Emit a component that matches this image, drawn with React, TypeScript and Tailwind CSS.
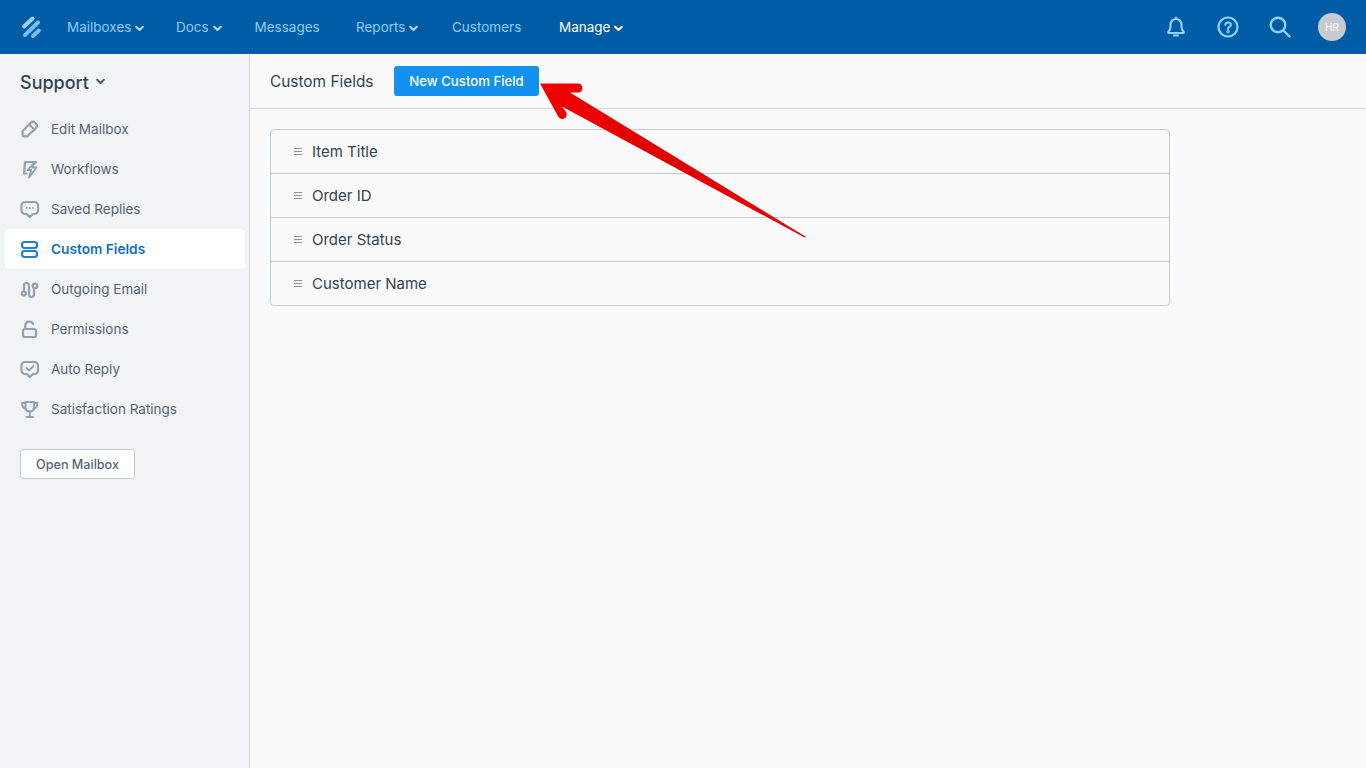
import React from "react";

const Chevron = ({ className = "" }: { className?: string }) => (
  <svg width="9" height="7" viewBox="0 0 9 7" fill="none" className={className}>
    <path d="M1.200 1.700 4.500 5l3.300-3.300" stroke="currentColor" strokeWidth="2" strokeLinecap="round" strokeLinejoin="round" />
  </svg>
);

const NavItem = ({ label, chevron, active, className = "" }: { label: string; chevron?: boolean; active?: boolean; className?: string }) => (
  <div className={`flex items-center gap-[4px] text-[13.500px] leading-[20px] -mt-[1px] ${active ? "text-white" : "text-[#8fcbfb]"} ${className}`}>
    <span>{label}</span>
    {chevron && <Chevron className={active ? "text-white mt-[3px]" : "text-[#b5dcfb] mt-[3px]"} />}
  </div>
);

const stroke = { fill: "none", stroke: "currentColor", strokeWidth: 2.200, strokeLinecap: "round" as const, strokeLinejoin: "round" as const };

const icons: Record<string, React.ReactNode> = {
  edit: (
    <g {...stroke}>
      <path d="M2.500 12.300 10.800 3.800a3 3 0 0 1 4.200 0l1 1a3 3 0 0 1 0 4.200L7.300 17.300H3.500a1 1 0 0 1-1-1Z" />
      <path d="m9.300 5.500 5.200 5.200" />
    </g>
  ),
  flow: (
    <g {...stroke}>
      <path d="M6.500 14.500H4L5 3h11l-2.200 1.600" />
      <path d="M16.500 8.500h-4.200l1.500-4.200L7.500 11h3.800L9 18.500Z" strokeWidth="1.800" />
    </g>
  ),
  reply: (
    <g>
      <path {...stroke} d="M5 3h9.500A3.500 3.500 0 0 1 18 6.500v5a3.500 3.500 0 0 1-3.500 3.500H13l-3.200 3-3.200-3H5a3.500 3.500 0 0 1-3.500-3.500v-5A3.500 3.500 0 0 1 5 3Z" />
      <circle cx="6.700" cy="9" r="1" fill="currentColor" />
      <circle cx="9.800" cy="9" r="1" fill="currentColor" />
      <circle cx="12.900" cy="9" r="1" fill="currentColor" />
    </g>
  ),
  fields: (
    <g {...stroke}>
      <rect x="2" y="3" width="15" height="6" rx="2.500" />
      <rect x="2" y="12" width="15" height="6" rx="2.500" />
    </g>
  ),
  outgoing: (
    <g {...stroke}>
      <path d="M4 11.500V6.500a2.500 2.500 0 0 1 5 0v9a2.500 2.500 0 0 0 5 0V11" />
      <circle cx="15" cy="7" r="2.300" />
      <circle cx="3.800" cy="14.500" r="2" />
    </g>
  ),
  lock: (
    <g {...stroke}>
      <rect x="3" y="10" width="13" height="8" rx="2" />
      <path d="M5.300 10V6.500a4 4 0 0 1 7.700-1.500" />
    </g>
  ),
  auto: (
    <g {...stroke}>
      <path d="M5 3h9.500A3.500 3.500 0 0 1 18 6.500v5a3.500 3.500 0 0 1-3.500 3.500H13l-3.200 3-3.200-3H5a3.500 3.500 0 0 1-3.500-3.500v-5A3.500 3.500 0 0 1 5 3Z" />
      <path d="m6.500 9 2.500 2.500L13.500 7" strokeWidth="1.800" />
    </g>
  ),
  trophy: (
    <g {...stroke} strokeWidth="1.900">
      <path d="M5.500 3h8.500v5.500c0 2.500-1.800 4-4.250 4S5.500 11 5.500 8.500Z" />
      <path d="M5.200 4H2c0 3.500 1.200 5.300 4 5.800M14.300 4h3.200c0 3.500-1.200 5.300-4 5.800" />
      <path d="M9.750 13v4.500M6.500 18h6.500" />
    </g>
  ),
};

const side = [
  ["Edit Mailbox", "edit"],
  ["Workflows", "flow"],
  ["Saved Replies", "reply"],
  ["Custom Fields", "fields"],
  ["Outgoing Email", "outgoing"],
  ["Permissions", "lock"],
  ["Auto Reply", "auto"],
  ["Satisfaction Ratings", "trophy"],
];

const rows = ["Item Title", "Order ID", "Order Status", "Customer Name"];

export default function App() {
  return (
    <div className="relative w-full h-[768px] overflow-hidden bg-[#fafafa] font-['Inter',sans-serif] text-[#314351]">
      <header className="h-[54px] bg-[#005ca4] flex items-center">
        <div className="w-[67px] pl-[20px] flex items-center">
          <svg width="22" height="24" viewBox="0 0 22 24" fill="none" strokeLinecap="round">
            <path d="M4 11.500 12.500 3.500" stroke="#9ad3fc" strokeWidth="4" />
            <path d="M5 20 18 7.500" stroke="#72bff8" strokeWidth="4" />
            <path d="M13 21 18.800 15.500" stroke="#72bff8" strokeWidth="4" />
          </svg>
        </div>
        <NavItem label="Mailboxes" chevron className="w-[109px]" />
        <NavItem label="Docs" chevron className="w-[78.500px]" />
        <NavItem label="Messages" className="w-[101.500px]" />
        <NavItem label="Reports" chevron className="w-[96px]" />
        <NavItem label="Customers" className="w-[107px]" />
        <NavItem label="Manage" chevron active />
        <div className="ml-auto flex items-center text-[#8fd0fc]">
          <svg width="22" height="24" viewBox="0 0 22 24" fill="none" stroke="currentColor" strokeWidth="2.200" strokeLinejoin="round" strokeLinecap="round">
            <path d="M3.500 16.500c1.300-1.300 2-2.500 2-5V9.500a5.500 5.500 0 0 1 11 0v2c0 2.500.7 3.700 2 5 .6.600.2 1.500-.6 1.500H4.100c-.8 0-1.200-.9-.6-1.500Z" />
            <path d="M11 2.500V4M9 20.500h4" />
          </svg>
          <svg className="ml-[30px]" width="22" height="22" viewBox="0 0 22 22" fill="none" stroke="currentColor" strokeWidth="2.200" strokeLinecap="round">
            <circle cx="11" cy="11" r="9.500" />
            <path d="M8.300 8.700A2.800 2.800 0 0 1 11 6.500c1.600 0 2.800 1 2.800 2.400 0 2-2.800 2-2.800 4" />
            <circle cx="11" cy="15.800" r=".6" fill="currentColor" />
          </svg>
          <svg className="ml-[30px]" width="22" height="22" viewBox="0 0 22 22" fill="none" stroke="currentColor" strokeWidth="2.400" strokeLinecap="round">
            <circle cx="9" cy="9" r="7.300" />
            <path d="m14.500 14.500 6 6" />
          </svg>
          <div className="ml-[27px] mr-[20px] w-[28px] h-[28px] rounded-full bg-[#c6cbd2] text-white text-[10px] flex items-center justify-center">HR</div>
        </div>
      </header>
      <div className="flex h-[714px]">
        <aside className="w-[250px] shrink-0 bg-[#f1f3f5] border-r border-[#d5dce1] pl-[5px] pr-[4px]">
          <div className="pl-[15px] pt-[17px] h-[55px] flex items-start gap-[7px]">
            <span className="text-[18px] leading-[24px] font-medium text-[#314351]">Support</span>
            <Chevron className="text-[#4c5f6e] mt-[7px]" />
          </div>
          <nav className="flex flex-col">
            {side.map(([label, icon]) => {
              const active = label === "Custom Fields";
              return (
                <div key={label} className={`h-[40px] flex items-center pl-[15px] rounded-[4px] leading-[20px] ${active ? "bg-white text-[#0f6fc6] font-semibold text-[13.700px]" : "text-[#556575] text-[13.500px]"}`}>
                  <svg width="21" height="21" viewBox="0 0 21 21" className={active ? "text-[#1a80d8]" : "text-[#93a1af]"}>
                    {icons[icon]}
                  </svg>
                  <span className="ml-[10px] -mt-[1px]">{label}</span>
                </div>
              );
            })}
          </nav>
          <button className="ml-[15px] mt-[20px] h-[30px] w-[115px] pt-[2px] bg-white border border-[#c1cbd4] rounded-[3px] text-[12.600px] font-medium text-[#556575] flex items-center justify-center">
            Open Mailbox
          </button>
        </aside>
        <main className="flex-1">
          <div className="h-[55px] border-b border-[#d5dce1] flex items-center pl-[20px]">
            <span className="text-[15.400px] text-[#314351] w-[124px] pt-[2px]">Custom Fields</span>
            <button className="h-[30px] w-[145px] pt-[2px] bg-[#1292ee] rounded-[3px] text-white text-[13.200px] font-medium flex items-center justify-center">
              New Custom Field
            </button>
          </div>
          <div className="ml-[20px] mt-[20px] w-[900px] border border-[#c1cbd4] rounded-[4px]">
            {rows.map((r, i) => (
              <div key={r} className={`flex items-center pl-[23px] ${i > 0 ? "h-[44px] border-t border-[#c1cbd4]" : "h-[43px]"}`}>
                <svg className="-mt-[1px]" width="8" height="8" viewBox="0 0 8 8" stroke="#8a96a3" strokeWidth="1">
                  <path d="M0 1.500h8M0 4.500h8M0 7.500h8" />
                </svg>
                <span className="ml-[10px] text-[15px] text-[#314351] pt-[2px]">{r}</span>
              </div>
            ))}
          </div>
        </main>
      </div>
      <svg className="absolute left-[530px] top-[70px]" width="290" height="180" viewBox="0 0 290 180">
        <defs>
          <linearGradient id="arrow" x1="0" y1="0" x2="1" y2="1">
            <stop offset="0" stopColor="#f40000" />
            <stop offset=".5" stopColor="#dd0000" />
            <stop offset="1" stopColor="#f00000" />
          </linearGradient>
        </defs>
        <path
          d="M10 13.500H48a4.700 4.700 0 0 1 1.500 9H40L275.800 166.800 275 167.800 32 36.500 36 42a4.500 4.500 0 0 1-7.500 5Z"
          fill="url(#arrow)"
        />
      </svg>
    </div>
  );
}
